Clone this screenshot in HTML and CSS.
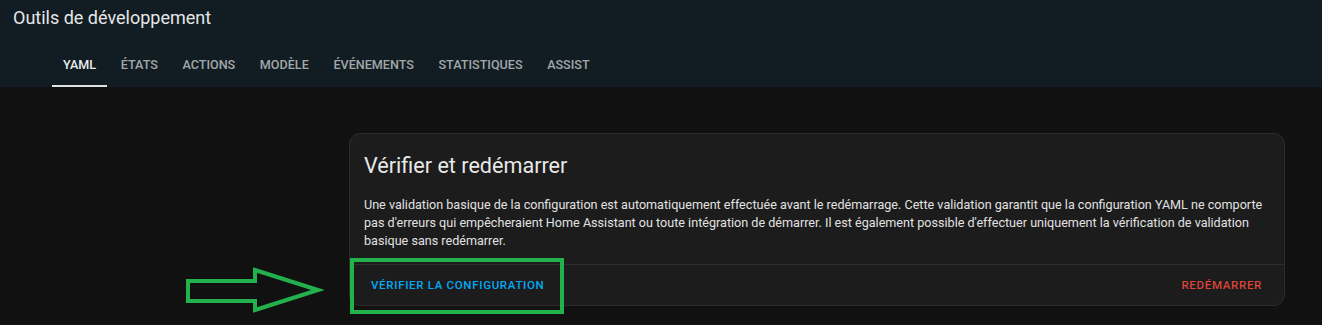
FILE: index.html
```html
<!DOCTYPE html>
<html lang="fr">
<head>
<meta charset="utf-8">
<title>Outils de développement</title>
<link rel="stylesheet" href="styles.css">
</head>
<body>
<header class="app-header">
  <div class="toolbar">Outils de développement</div>
  <nav class="tabs">
    <a class="tab active">YAML</a>
    <a class="tab">États</a>
    <a class="tab">Actions</a>
    <a class="tab">Modèle</a>
    <a class="tab">Événements</a>
    <a class="tab">Statistiques</a>
    <a class="tab">Assist</a>
  </nav>
</header>
<main class="content">
  <section class="card">
    <h1 class="card-title">Vérifier et redémarrer</h1>
    <p class="card-text">Une validation basique de la configuration est automatiquement effectuée avant le redémarrage. Cette validation garantit que la configuration YAML ne comporte pas d'erreurs qui empêcheraient Home Assistant ou toute intégration de démarrer. Il est également possible d'effectuer uniquement la vérification de validation basique sans redémarrer.</p>
    <div class="card-actions">
      <button class="btn btn-primary">Vérifier la configuration</button>
      <button class="btn btn-danger">Redémarrer</button>
    </div>
  </section>
</main>
<div class="highlight-box"></div>
<svg class="highlight-arrow" width="140" height="52" viewBox="0 0 140 52">
  <polygon points="4,15 71,15 71,4 134,24 71,44 71,35 4,35" fill="none" stroke="#22b14c" stroke-width="4" stroke-linejoin="miter"/>
</svg>
</body>
</html>
```
FILE: styles.css
```css
* { box-sizing: border-box; }
html, body { margin: 0; padding: 0; }
body {
  background: #111111;
  font-family: Roboto, "Noto Sans", sans-serif;
  color: #e1e1e1;
  width: 1322px;
  height: 325px;
  overflow: hidden;
  position: relative;
}
.app-header {
  background: #111d23;
  height: 87px;
  display: flex;
  flex-direction: column;
}
.toolbar {
  height: 40px;
  line-height: 35px;
  padding-left: 13px;
  font-size: 18px;
  font-weight: 400;
  color: #e6e6e6;
}
.tabs {
  display: flex;
  gap: 2.6px;
  height: 47px;
  padding-left: 52px;
}
.tab {
  display: flex;
  align-items: center;
  padding: 4px 11px 0;
  font-size: 12.6px;
  font-weight: 500;
  text-transform: uppercase;
  color: #a2a7aa;
  border-bottom: 2px solid transparent;
}
.tab.active {
  color: #ececec;
  border-bottom-color: #e1e1e1;
}
.content {
  padding: 46px 37px 0 349px;
}
.card {
  background: #1c1c1c;
  border: 1px solid #2c2c2c;
  border-radius: 11px;
}
.card-title {
  margin: 0;
  padding: 16px 14px 0;
  font-size: 21.6px;
  line-height: 32px;
  font-weight: 400;
  color: #e8e8e8;
}
.card-text {
  margin: 14px 0 0;
  padding: 0 14px 14px;
  font-size: 12.6px;
  line-height: 18px;
  color: #e1e1e1;
}
.card-actions {
  border-top: 1px solid #2e2e2e;
  height: 41px;
  display: flex;
  justify-content: space-between;
  align-items: center;
  padding: 0 22px 0 21px;
}
.btn {
  background: none;
  border: none;
  padding: 0;
  font-family: inherit;
  font-size: 11.5px;
  font-weight: 500;
  letter-spacing: 0.68px;
  text-transform: uppercase;
}
.btn-primary { color: #03a9f4; }
.btn-danger { color: #db4437; }
.highlight-box {
  position: absolute;
  left: 350px;
  top: 258px;
  width: 214px;
  height: 56px;
  border: 4px solid #22b14c;
}
.highlight-arrow {
  position: absolute;
  left: 184px;
  top: 266px;
}
```
